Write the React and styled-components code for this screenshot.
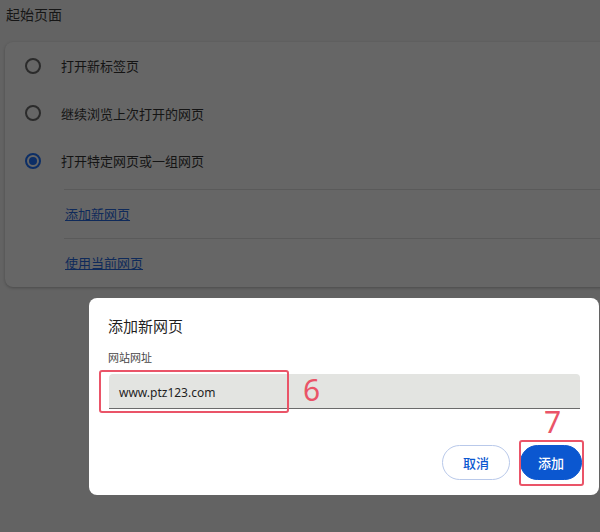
import React from 'react'
import styled, { createGlobalStyle } from 'styled-components'

const Global = createGlobalStyle`
html, body {
  margin: 0;
  padding: 0;
  background: #636363;
  font-family: "Noto Sans CJK SC", "Noto Sans", sans-serif;
  overflow: hidden;
}
`;

const Page = styled.div`
position: relative;
width: 600px;
height: 532px;
overflow: hidden;
`;

const Heading = styled.div`
padding: 4px 0 0 6px;
height: 42px;
box-sizing: border-box;
font-size: 14px;
color: #161616;
`;

const Card = styled.div`
margin-left: 5px;
width: 620px;
box-sizing: border-box;
background: #666666;
border-radius: 8px;
box-shadow: 0 1px 3px rgba(0, 0, 0, 0.25);
`;

const Row = styled.div`
display: flex;
align-items: center;
height: 47.5px;
padding-left: 20px;
font-size: 13px;
color: #141414;
`;

const Radio = styled.span`
width: 12px;
height: 12px;
border-radius: 50%;
border: 2px solid ${p => (p.checked ? '#0c2e66' : '#2b2b2b')};
display: flex;
align-items: center;
justify-content: center;
margin-right: 20px;
&::after {
  content: '';
  display: ${p => (p.checked ? 'block' : 'none')};
  width: 8px;
  height: 8px;
  border-radius: 50%;
  background: #0c2e66;
}
`;

const Links = styled.div`
margin-top: 4px;
`;

const LinkRow = styled.div`
margin-left: 59px;
height: 48px;
border-top: 1px solid #5a5a5a;
display: flex;
align-items: center;
font-size: 13px;
`;

const Link = styled.span`
color: #0f2a5a;
text-decoration: underline;
margin-left: 1px;
`;

const Dialog = styled.div`
position: absolute;
left: 89px;
top: 298px;
width: 510px;
height: 197px;
background: #fff;
border-radius: 8px;
padding: 18px 17px 0 19px;
box-sizing: border-box;
display: flex;
flex-direction: column;
`;

const DialogTitle = styled.div`
font-size: 15px;
color: #1f1f1f;
line-height: 20px;
`;

const Label = styled.div`
margin-top: 13px;
font-size: 11px;
color: #474747;
line-height: 16px;
`;

const Input = styled.div`
margin-top: 9px;
margin-left: 1px;
width: 471px;
height: 35px;
box-sizing: border-box;
background: #e3e4e1;
border-radius: 4px 4px 0 0;
border-bottom: 1px solid #6b6b6b;
padding: 2px 0 0 10px;
display: flex;
align-items: center;
font-size: 12px;
color: #1f1f1f;
font-family: "Noto Sans", "Noto Sans CJK SC", sans-serif;
`;

const Actions = styled.div`
display: flex;
justify-content: flex-end;
gap: 10px;
margin-top: 36px;
`;

const Button = styled.div`
height: 35px;
padding: 0 ${p => (p.primary ? '17px' : '20px')};
box-sizing: border-box;
border-radius: 18px;
display: flex;
align-items: center;
font-size: 13px;
font-weight: 500;
color: ${p => (p.primary ? '#fff' : '#0b57d0')};
background: ${p => (p.primary ? '#0b57d0' : '#fff')};
border: 1px solid ${p => (p.primary ? '#0b57d0' : '#b9c9ea')};
`;

const Mark = styled.div`
position: absolute;
box-sizing: border-box;
border: 2px solid #ea5468;
border-radius: 3px;
`;

const Num = styled.div`
position: absolute;
color: #ea5468;
font-size: 30px;
line-height: 30px;
font-family: "Noto Sans", sans-serif;
`;

const options = [
  { label: '打开新标签页', checked: false },
  { label: '继续浏览上次打开的网页', checked: false },
  { label: '打开特定网页或一组网页', checked: true },
];

const App = () => {
  return (
    <Page>
      <Global />
      <Heading>起始页面</Heading>
      <Card>
        {options.map(o => (
          <Row key={o.label}>
            <Radio checked={o.checked} />
            {o.label}
          </Row>
        ))}
        <Links>
          <LinkRow><Link>添加新网页</Link></LinkRow>
          <LinkRow><Link>使用当前网页</Link></LinkRow>
        </Links>
      </Card>
      <Dialog>
        <DialogTitle>添加新网页</DialogTitle>
        <Label>网站网址</Label>
        <Input>www.ptz123.com</Input>
        <Actions>
          <Button>取消</Button>
          <Button primary>添加</Button>
        </Actions>
      </Dialog>
      <Mark style={{ left: 99, top: 370, width: 190, height: 43 }} />
      <Num style={{ left: 303, top: 375 }}>6</Num>
      <Mark style={{ left: 519, top: 440, width: 65, height: 46 }} />
      <Num style={{ left: 544, top: 407 }}>7</Num>
    </Page>
  )
}

export default App
